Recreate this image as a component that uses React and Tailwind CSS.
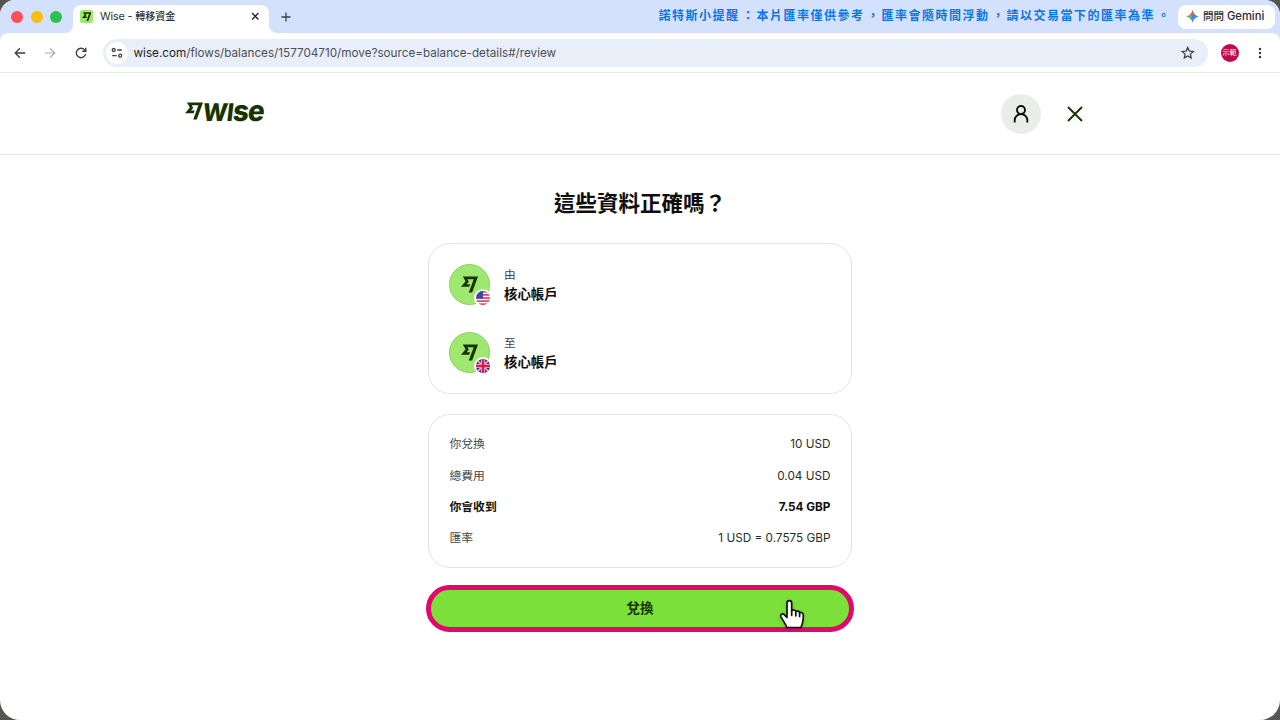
import React from "react";

const SANS = "font-['Inter','Noto_Sans_CJK_TC',sans-serif]";

function WiseFlag({ className }) {
  return (
    <svg viewBox="0 0 24 24" className={className} fill="currentColor" aria-hidden="true">
      <path d="M6.488 7.469 0 15.05h11.585l1.301-3.576H7.922l3.033-3.507.01-.092L8.993 4.48h8.873l-6.878 18.925h4.706L24 .595H2.543l3.945 6.874Z" />
    </svg>
  );
}

function UsFlag() {
  return (
    <svg viewBox="0 0 14 14" className="size-[14px]">
      <rect width="14" height="14" fill="#fff" />
      {[0, 3.1, 6.2, 9.3, 12.4].map((y) => (
        <rect key={y} y={y} width="14" height="1.6" fill="#e0335c" />
      ))}
      <rect width="7" height="7.6" fill="#3c4aa0" />
    </svg>
  );
}

function UkFlag() {
  return (
    <svg viewBox="0 0 14 14" className="size-[14px]">
      <rect width="14" height="14" fill="#2b2f86" />
      <path d="M0 0 14 14M14 0 0 14" stroke="#f3a9bd" strokeWidth="1.6" />
      <path d="M7 0v14M0 7h14" stroke="#fbd5de" strokeWidth="4.2" />
      <path d="M7 0v14M0 7h14" stroke="#e0174f" strokeWidth="2.6" />
    </svg>
  );
}

function Notice() {
  const parts = [
    ["諾特斯小提醒", "："],
    ["本片匯率僅供參考", "，"],
    ["匯率會隨時間浮動", "，"],
    ["請以交易當下的匯率為準", "。"],
  ];
  return (
    <div className="flex h-[18px] items-center whitespace-nowrap text-[12px] leading-[18px] font-bold text-[#0a76e6]">
      {parts.map(([text, mark]) => (
        <React.Fragment key={text}>
          <span className="tracking-[1.5px]">{text}</span>
          <span className="w-[17px] text-center">{mark}</span>
        </React.Fragment>
      ))}
    </div>
  );
}

function TabStrip() {
  return (
    <div className="flex h-[33px] bg-[#d3e1fd]">
      <div className="flex w-[65px] items-center gap-[7.5px] pl-[11px]">
        <span className="size-3 rounded-full bg-[#fe4f57]" />
        <span className="size-3 rounded-full bg-[#f9be0a]" />
        <span className="size-3 rounded-full bg-[#2cc04f]" />
      </div>
      <div className="flex items-end">
        <svg viewBox="0 0 8 8" className="size-2 fill-white"><path d="M8 0v8H0a8 8 0 0 0 8-8Z" /></svg>
        <div className="flex h-7 w-[196px] items-center rounded-t-[8px] bg-white pr-[9.5px] pb-[5px] pl-[7px]">
          <span className="flex size-[13px] items-center justify-center rounded-[2px] bg-[#9fe870] text-[#163300]">
            <WiseFlag className="size-[9.5px]" />
          </span>
          <span className="ml-[7px] flex flex-1 items-center gap-[3px] text-[10.8px] leading-4 whitespace-nowrap text-[#2b2d31]">
            <span className="tracking-[-0.15px]">Wise -</span>
            <span className="mb-px text-[10px] font-medium">轉移資金</span>
          </span>
          <svg viewBox="0 0 8 8" className="size-[8.5px]" stroke="#222" strokeWidth="1.2"><path d="M1 1l6 6M7 1 1 7" /></svg>
        </div>
        <svg viewBox="0 0 8 8" className="size-2 fill-white"><path d="M0 0v8h8a8 8 0 0 1-8-8Z" /></svg>
      </div>
      <svg viewBox="0 0 10 10" className="mt-[11.5px] ml-1 size-[10px]" stroke="#3c4043" strokeWidth="1.3"><path d="M5 .5v9M.5 5h9" /></svg>
      <div className="ml-auto flex items-start pr-[5px]">
        <div className="pt-[7px] pr-[6px]"><Notice /></div>
        <div className="mt-[4.5px] flex h-6 w-[97px] items-center rounded-[8px] bg-white pl-[7.5px] text-[#25272b]">
          <svg viewBox="0 0 24 24" className="size-[13px]">
            <defs>
              <linearGradient id="gem" x1="0" y1="1" x2="1" y2="0">
                <stop offset="0" stopColor="#3cb371" />
                <stop offset=".4" stopColor="#3b8df5" />
                <stop offset="1" stopColor="#4080f0" />
              </linearGradient>
            </defs>
            <path d="M12 0c1.2 6.6 5.4 10.8 12 12-6.6 1.2-10.8 5.4-12 12C10.8 17.4 6.6 13.2 0 12 6.6 10.8 10.8 6.6 12 0Z" fill="url(#gem)" />
            <path d="M12 0c1.2 4 2.5 6.5 4.5 8.5L12 11 8 8.4C10.3 6.2 11.5 3.5 12 0Z" fill="#ea5a55" />
            <path d="M0 12c3.5-.6 6-1.8 8.2-3.8L11 12l-2.6 3.7C6.2 13.7 3.5 12.6 0 12Z" fill="#7dbb4a" />
          </svg>
          <span className="ml-[4.5px] text-[11.2px] leading-4 font-medium whitespace-nowrap"><span className="text-[10.5px]">問問</span> Gemini</span>
        </div>
      </div>
    </div>
  );
}

function Toolbar() {
  return (
    <div className="h-10 bg-[#d3e1fd]">
      <div className="flex h-10 items-center rounded-t-[8px] border-b border-[#e4e6e8] bg-white">
        <svg viewBox="0 0 12 12" className="ml-[13.5px] size-3" fill="none" stroke="#3c4043" strokeWidth="1.3"><path d="M11.2 6H1.2M5.9 1.3 1.2 6l4.7 4.7" /></svg>
        <svg viewBox="0 0 12 12" className="ml-[18.5px] size-3" fill="none" stroke="#a9abae" strokeWidth="1.2"><path d="M.8 6h10M6.1 1.3 10.8 6l-4.7 4.7" /></svg>
        <svg viewBox="0 0 12 12" className="ml-[18.5px] size-3" fill="none" stroke="#3c4043" strokeWidth="1.4"><path d="M10.6 7.1A4.7 4.7 0 1 1 9.6 2.9L10.7 4" /><path d="M10.8.8v3.5H7.2" /></svg>
        <div className="ml-[16px] flex h-[28px] w-[1105px] items-center rounded-full bg-[#e9eff8] px-[3px]">
          <span className="flex size-[22px] items-center justify-center rounded-full bg-white">
            <svg viewBox="0 0 12 12" className="size-3" fill="none" stroke="#3c4043" strokeWidth="1.3"><circle cx="2.7" cy="3" r="1.5" /><path d="M6.3 3h4.5M1.2 8.7h4.5" /><circle cx="9.2" cy="8.7" r="1.5" /></svg>
          </span>
          <span className="ml-[6px] text-[11.7px] leading-4 whitespace-nowrap text-[#4b4f56]"><span className="text-[#1f2124]">wise.com</span>/flows/balances/157704710/move?source=balance-details#/review</span>
          <svg viewBox="0 0 24 24" className="mr-[10px] ml-auto size-[13.5px]" fill="none" stroke="#3c4043" strokeWidth="2.2"><path d="m12 2.5 2.9 6.5 7.1.7-5.3 4.7 1.5 7L12 17.8l-6.2 3.6 1.5-7L2 9.7l7.1-.7Z" /></svg>
        </div>
        <span className="ml-[13px] flex size-[18px] items-center justify-center rounded-full bg-[#c0094f] text-[7px] leading-none text-white">示範</span>
        <svg viewBox="0 0 4 12" className="ml-[19.5px] h-3 w-1" fill="#303236"><circle cx="2" cy="2" r="1.2" /><circle cx="2" cy="6" r="1.2" /><circle cx="2" cy="10" r="1.2" /></svg>
      </div>
    </div>
  );
}

function Header() {
  return (
    <div className="flex h-[82px] items-center border-b border-[#e4e5e4] pr-[197px] pl-[185px]">
      <div className="mb-[6px] flex items-center text-[#163300]">
        <WiseFlag className="size-[18px]" />
        <span className="flex h-[24px] origin-left scale-x-[0.96] -skew-x-[7deg] items-baseline leading-[24px] font-extrabold tracking-[-0.8px]">
          <span className="text-[24.5px]">WI</span>
          <span className="text-[29px] tracking-[-0.8px]">se</span>
        </span>
      </div>
      <span className="ml-auto flex size-10 items-center justify-center rounded-full bg-[#ebedeb]">
        <svg viewBox="0 0 16 18" className="h-[18px] w-4" fill="none" stroke="#0e0f0c" strokeWidth="1.9"><circle cx="8" cy="5" r="4" /><path d="M1.7 17.5v-2.2a6.3 6.3 0 0 1 12.6 0v2.2" /></svg>
      </span>
      <svg viewBox="0 0 16 16" className="ml-[26px] size-4" stroke="#163300" strokeWidth="1.9"><path d="M1 1l14 14M15 1 1 15" /></svg>
    </div>
  );
}

function Account({ label, flag }) {
  return (
    <div className="flex h-[41px] items-center">
      <span className="relative flex size-[41px] items-center justify-center rounded-full border border-[#8ccf62] bg-[#9fe870] text-[#163300]">
        <WiseFlag className="size-[17px]" />
        <span className="absolute right-[-3px] bottom-[-3px] flex size-[18px] items-center justify-center rounded-full bg-white">
          <span className="size-[14px] overflow-hidden rounded-full">{flag}</span>
        </span>
      </span>
      <span className="ml-[14px] flex flex-col">
        <span className="text-[11.7px] leading-[19px] text-[#454745]">{label}</span>
        <span className="text-[13.4px] leading-[18px] font-bold text-[#0e0f0c]">核心帳戶</span>
      </span>
    </div>
  );
}

const ROWS = [
  { label: "你兌換", value: "10 USD" },
  { label: "總費用", value: "0.04 USD" },
  { label: "你會收到", value: "7.54 GBP", strong: true },
  { label: "匯率", value: "1 USD = 0.7575 GBP" },
];

function Hand() {
  return (
    <svg viewBox="0 0 26 32" className="absolute top-[9px] left-[348px] h-[32px] w-[26px] drop-shadow-sm" fill="#fff" stroke="#111" strokeWidth="1.7" strokeLinejoin="round" strokeLinecap="round">
      <path d="M7.7 28.5c-.6-2.6-2-4.3-3.3-6.6-1-1.8-2.3-3.3-2.7-4.6-.5-1.8 1.7-3.2 3.5-1.7L8 18.300V4.200c0-3.300 4.700-3.300 4.700 0v7.500c1.500-1.400 3.700-.7 4.100.8 1.500-1 3.400-.3 3.800 1.200 1.800-.7 3.700.4 3.700 2.500 0 4.500-.3 8.300-2.500 12.300Z" />
      <path d="M12.7 11.7v4.6M16.8 12.5v4.3M20.6 13.7v3.8" fill="none" />
    </svg>
  );
}

export default function App() {
  return (
    <div className={`h-[720px] w-[1280px] overflow-hidden bg-[#55564f] ${SANS}`}>
      <div className="flex h-full flex-col overflow-hidden rounded-t-[15px] rounded-b-[20px] bg-white">
        <TabStrip />
        <Toolbar />
        <Header />
        <main className="flex flex-col items-center">
          <h1 className="mt-[32px] text-[21.5px] leading-[32px] font-bold text-[#0e0f0c]">這些資料正確嗎？</h1>
          <section className="mt-[24px] flex h-[151px] w-[424px] flex-col gap-[27px] rounded-[22px] border border-[#e2e4e2] pt-[20px] pl-[20px]">
            <Account label="由" flag={<UsFlag />} />
            <Account label="至" flag={<UkFlag />} />
          </section>
          <section className="mt-[20px] flex h-[154px] w-[424px] flex-col rounded-[22px] border border-[#e2e4e2] pt-[14px] pr-[20.5px] pl-[20.5px]">
            {ROWS.map((r) => (
              <div key={r.label} className={r.strong ? "flex h-[31.3px] items-center justify-between text-[11.8px] font-bold text-[#0e0f0c]" : "flex h-[31.3px] items-center justify-between text-[11.8px] text-[#454745]"}>
                <span className="pt-px">{r.label}</span>
                <span className={r.strong ? "pt-px text-[11.75px]" : "pt-px text-[11.75px] text-[#2a2c29]"}>{r.value}</span>
              </div>
            ))}
          </section>
          <button className="relative mt-[17px] flex h-[47px] w-[428px] items-center justify-center rounded-full border-[5px] border-[#e0086c] bg-[#7be13a] text-[13.4px] font-bold text-[#163300]">
            兌換
            <Hand />
          </button>
        </main>
      </div>
    </div>
  );
}
